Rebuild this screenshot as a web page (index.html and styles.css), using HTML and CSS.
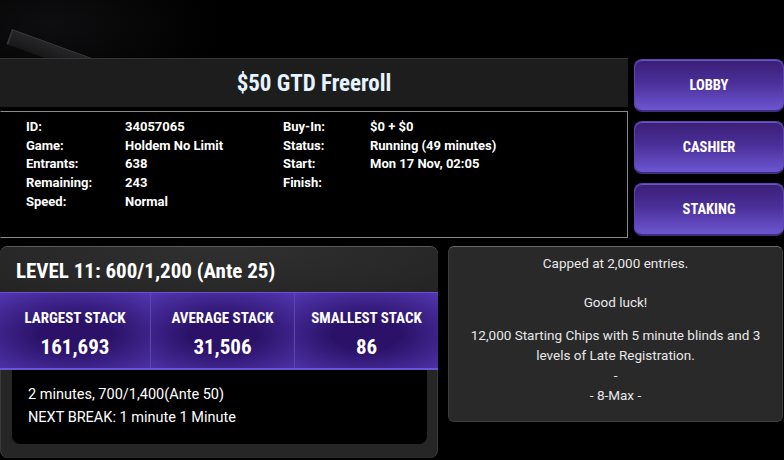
FILE: index.html
```html
<!DOCTYPE html>
<html>
<head>
<meta charset="utf-8">
<link rel="stylesheet" href="styles.css">
</head>
<body>
<div class="page">
  <div class="backdrop"><div class="shard"></div></div>
  <div class="top">
    <div class="main">
      <div class="title">$50 GTD Freeroll</div>
      <div class="info">
        <span class="k">ID:</span><span class="v">34057065</span><span class="k">Buy-In:</span><span class="v">$0 + $0</span>
        <span class="k">Game:</span><span class="v">Holdem No Limit</span><span class="k">Status:</span><span class="v">Running (49 minutes)</span>
        <span class="k">Entrants:</span><span class="v">638</span><span class="k">Start:</span><span class="v">Mon 17 Nov, 02:05</span>
        <span class="k">Remaining:</span><span class="v">243</span><span class="k">Finish:</span><span class="v"></span>
        <span class="k">Speed:</span><span class="v">Normal</span><span class="k"></span><span class="v"></span>
      </div>
    </div>
    <div class="buttons">
      <div class="btn">LOBBY</div>
      <div class="btn">CASHIER</div>
      <div class="btn">STAKING</div>
    </div>
  </div>
  <div class="bottom">
    <div class="level">
      <div class="level-head">LEVEL 11: 600/1,200 (Ante 25)</div>
      <div class="stats">
        <div class="stat"><div class="stat-label">LARGEST STACK</div><div class="stat-value">161,693</div></div>
        <div class="stat"><div class="stat-label">AVERAGE STACK</div><div class="stat-value">31,506</div></div>
        <div class="stat"><div class="stat-label">SMALLEST STACK</div><div class="stat-value">86</div></div>
      </div>
      <div class="next">
        <div class="next-line">2 minutes, 700/1,400(Ante 50)</div>
        <div class="next-line">NEXT BREAK: 1 minute 1 Minute</div>
      </div>
    </div>
    <div class="notes">
      <p class="first">Capped at 2,000 entries.</p>
      <p class="luck">Good luck!</p>
      <p class="desc">12,000 Starting Chips with 5 minute blinds and 3 levels of Late Registration.<br>-<br>- 8-Max -</p>
    </div>
  </div>
</div>
</body>
</html>
```

FILE: styles.css
```css
html, body {
  margin: 0;
  padding: 0;
  background: #000;
}

body {
  font-family: Roboto, "Liberation Sans", sans-serif;
  color: #fff;
  width: 784px;
  height: 460px;
  overflow: hidden;
}

.page {
  position: relative;
  width: 784px;
}

.backdrop {
  position: relative;
  height: 58px;
  overflow: hidden;
  background: radial-gradient(ellipse 170px 80px at 50px 25px, #0e0e10 0%, #000 100%);
}

.shard {
  position: absolute;
  left: 12px;
  top: 29px;
  width: 130px;
  height: 15px;
  transform: rotate(20deg);
  transform-origin: 0 0;
  background: linear-gradient(#262628, #171718);
  border-top: 1px solid #3a3a3c;
  border-left: 2px solid #353537;
}

.top {
  display: flex;
  gap: 6px;
}

.main {
  width: 628px;
  display: flex;
  flex-direction: column;
  gap: 4px;
}

.title {
  height: 48px;
  border-top: 1px solid #353535;
  background: #1d1d1d;
  display: flex;
  align-items: center;
  justify-content: center;
  font-family: "Roboto Condensed", Roboto, sans-serif;
  font-stretch: 80%;
  font-weight: 700;
  font-size: 23px;
  color: #e6f4ff;
}

.info {
  height: 127px;
  box-sizing: border-box;
  border: 1px solid #8a8a8a;
  border-left-color: #000;
  padding: 6px 0 0 25px;
  display: grid;
  grid-template-columns: 99px 158px 87px 1fr;
  grid-auto-rows: 18.7px;
  align-items: center;
  font-size: 13px;
  font-weight: 700;
  line-height: 18.7px;
}

.buttons {
  width: 150px;
  display: flex;
  flex-direction: column;
  gap: 9px;
  padding-top: 1px;
}

.btn {
  height: 53px;
  box-sizing: border-box;
  border-radius: 8px;
  background: linear-gradient(#3a1e75 0%, #4a2f98 45%, #6d55d0 100%);
  border: 1px solid #5c45b0;
  border-bottom: 2px solid #3f2d80;
  box-shadow: inset 0 1px 0 #6a55c4;
  display: flex;
  align-items: center;
  justify-content: center;
  font-family: "Roboto Condensed", Roboto, sans-serif;
  font-stretch: 80%;
  font-weight: 700;
  font-size: 14.5px;
  color: #fff;
}

.bottom {
  display: flex;
  gap: 10px;
  margin-top: 8px;
  align-items: flex-start;
}

.level {
  width: 438px;
  height: 212px;
  box-sizing: border-box;
  border-radius: 8px;
  background: #262626;
  border-top: 1px solid #5a5a5a;
  box-shadow: inset 1px 0 0 #3a3a3a, inset -1px 0 0 #3a3a3a;
  display: flex;
  flex-direction: column;
  overflow: hidden;
}

.level-head {
  height: 45px;
  display: flex;
  align-items: center;
  padding-left: 16px;
  padding-top: 2px;
  box-sizing: border-box;
  background: radial-gradient(ellipse at 50% 0%, #303030, #242424);
  font-family: "Roboto Condensed", Roboto, sans-serif;
  font-stretch: 80%;
  font-weight: 700;
  font-size: 21px;
  color: #fff;
}

.stats {
  height: 78px;
  box-sizing: border-box;
  display: grid;
  grid-template-columns: 150px 144px 1fr;
  background: #2a1266;
  border-top: 1px solid #6a50d0;
  border-bottom: 2px solid #6a55d8;
  box-shadow: inset 1px 0 0 #6a50d0, inset -1px 0 0 #6a50d0;
}

.stat {
  display: flex;
  flex-direction: column;
  align-items: center;
  background: radial-gradient(ellipse 80% 70% at 50% 55%, #2b1268 30%, #5236b0 100%);
  border-left: 1px solid #5a45a8;
  padding-top: 16px;
}

.stat:first-child {
  border-left: none;
}

.stat-label {
  font-family: "Roboto Condensed", Roboto, sans-serif;
  font-stretch: 80%;
  font-weight: 700;
  font-size: 15px;
  line-height: 18px;
}

.stat-value {
  font-family: "Roboto Condensed", Roboto, sans-serif;
  font-stretch: 80%;
  font-weight: 700;
  font-size: 21px;
  line-height: 26px;
  margin-top: 7px;
}

.next {
  margin: 0 11px 14px 12px;
  flex: 1;
  background: #000;
  border-radius: 0 0 8px 8px;
  padding: 13px 0 0 16px;
  font-size: 14.5px;
  line-height: 23px;
  color: #fff;
}

.notes {
  width: 335px;
  height: 176px;
  box-sizing: border-box;
  border-radius: 6px;
  background: #292929;
  border: 1px solid #3c3c3c;
  border-top-color: #6a6a6a;
  text-align: center;
  font-size: 13.5px;
  line-height: 20px;
  color: #e8e8e8;
  padding: 6px 8px 0;
}

.notes p {
  margin: 0;
}

.notes .luck {
  margin-top: 19px;
}

.notes .desc {
  margin-top: 13px;
}
```
